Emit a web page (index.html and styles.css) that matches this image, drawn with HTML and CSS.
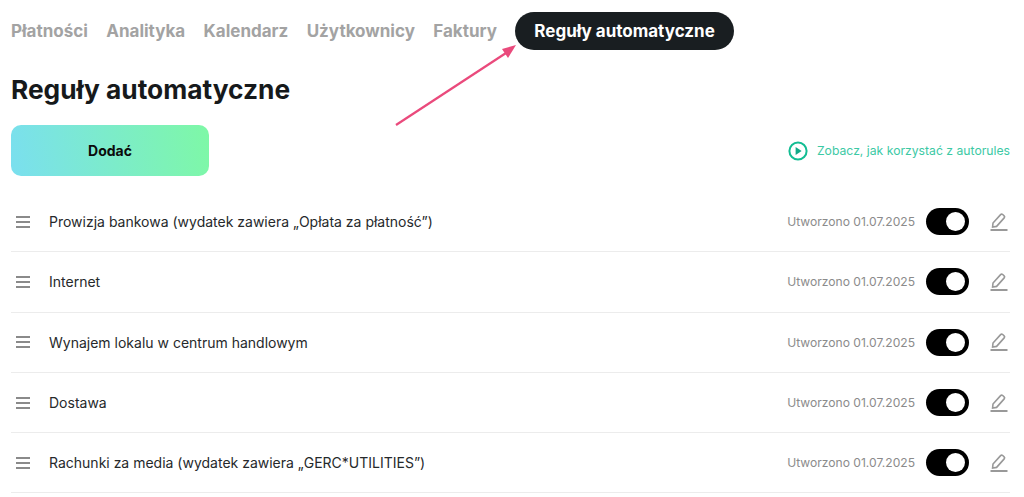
FILE: index.html
```html
<!DOCTYPE html>
<html lang="pl">
<head>
<meta charset="utf-8">
<title>Reguły automatyczne</title>
<link rel="stylesheet" href="styles.css">
</head>
<body>
<div class="page">
  <nav class="tabs">
    <span class="tab">Płatności</span>
    <span class="tab">Analityka</span>
    <span class="tab">Kalendarz</span>
    <span class="tab">Użytkownicy</span>
    <span class="tab">Faktury</span>
    <span class="tab active">Reguły automatyczne</span>
  </nav>
  <h1 class="title">Reguły automatyczne</h1>
  <div class="toolbar">
    <button class="add">Dodać</button>
    <a class="help">
      <svg class="play" viewBox="0 0 20 20"><circle cx="10" cy="10" r="8.6" fill="none" stroke="#12bd93" stroke-width="2"/><path d="M7.6 6l6 4-6 4z" fill="#12a987"/></svg>
      <span>Zobacz, jak korzystać z autorules</span>
    </a>
  </div>
  <ul class="rules">
    <li class="rule">
      <svg class="drag" viewBox="0 0 14 12"><path d="M0 1h14M0 6h14M0 11h14"/></svg>
      <span class="name">Prowizja bankowa (wydatek zawiera „Opłata za płatność”)</span>
      <span class="date">Utworzono 01.07.2025</span>
      <span class="toggle"><span class="knob"></span></span>
      <svg class="edit" viewBox="0 0 18 20"><path d="M2.6 15 3 11 10.6 2.6a1.5 1.5 0 0 1 2.1-.1l1.4 1.3a1.5 1.5 0 0 1 .1 2.1L6.6 14.4z"/><path class="edit-line" d="M0.5 18h17"/></svg>
    </li>
    <li class="rule">
      <svg class="drag" viewBox="0 0 14 12"><path d="M0 1h14M0 6h14M0 11h14"/></svg>
      <span class="name">Internet</span>
      <span class="date">Utworzono 01.07.2025</span>
      <span class="toggle"><span class="knob"></span></span>
      <svg class="edit" viewBox="0 0 18 20"><path d="M2.6 15 3 11 10.6 2.6a1.5 1.5 0 0 1 2.1-.1l1.4 1.3a1.5 1.5 0 0 1 .1 2.1L6.6 14.4z"/><path class="edit-line" d="M0.5 18h17"/></svg>
    </li>
    <li class="rule">
      <svg class="drag" viewBox="0 0 14 12"><path d="M0 1h14M0 6h14M0 11h14"/></svg>
      <span class="name">Wynajem lokalu w centrum handlowym</span>
      <span class="date">Utworzono 01.07.2025</span>
      <span class="toggle"><span class="knob"></span></span>
      <svg class="edit" viewBox="0 0 18 20"><path d="M2.6 15 3 11 10.6 2.6a1.5 1.5 0 0 1 2.1-.1l1.4 1.3a1.5 1.5 0 0 1 .1 2.1L6.6 14.4z"/><path class="edit-line" d="M0.5 18h17"/></svg>
    </li>
    <li class="rule">
      <svg class="drag" viewBox="0 0 14 12"><path d="M0 1h14M0 6h14M0 11h14"/></svg>
      <span class="name">Dostawa</span>
      <span class="date">Utworzono 01.07.2025</span>
      <span class="toggle"><span class="knob"></span></span>
      <svg class="edit" viewBox="0 0 18 20"><path d="M2.6 15 3 11 10.6 2.6a1.5 1.5 0 0 1 2.1-.1l1.4 1.3a1.5 1.5 0 0 1 .1 2.1L6.6 14.4z"/><path class="edit-line" d="M0.5 18h17"/></svg>
    </li>
    <li class="rule">
      <svg class="drag" viewBox="0 0 14 12"><path d="M0 1h14M0 6h14M0 11h14"/></svg>
      <span class="name">Rachunki za media (wydatek zawiera „GERC*UTILITIES”)</span>
      <span class="date">Utworzono 01.07.2025</span>
      <span class="toggle"><span class="knob"></span></span>
      <svg class="edit" viewBox="0 0 18 20"><path d="M2.6 15 3 11 10.6 2.6a1.5 1.5 0 0 1 2.1-.1l1.4 1.3a1.5 1.5 0 0 1 .1 2.1L6.6 14.4z"/><path class="edit-line" d="M0.5 18h17"/></svg>
    </li>
  </ul>
  <svg class="arrow" viewBox="0 0 130 90"><path d="M2 81 L 112 9" stroke="#ea4a7c" stroke-width="2.2" fill="none"/><path d="M122 1 L 108 5 L 114 14 Z" fill="#ea4a7c"/></svg>
</div>
</body>
</html>
```
FILE: styles.css
```css
* { box-sizing: border-box; }
html, body { margin: 0; padding: 0; background: #fff; }
body { font-family: Inter, "Liberation Sans", sans-serif; color: #1a1f22; overflow: hidden; }
.page { position: relative; width: 1024px; height: 497px; padding: 12px 14px 0 11px; overflow: hidden; }
.tabs { display: flex; align-items: center; gap: 18.4px; height: 38px; }
.tab { font-size: 17px; font-weight: 700; color: #a3a3a3; white-space: nowrap; }
.tab.active { background: #191e21; color: #fff; border-radius: 19px; height: 38px; line-height: 38px; padding: 0 19px; }
.title { margin: 24px 0 0; font-size: 26.3px; line-height: 32px; font-weight: 700; color: #16191b; }
.toolbar { display: flex; align-items: center; justify-content: space-between; margin-top: 19px; }
.add { width: 198px; height: 51px; border: 0; border-radius: 10px; font: 700 14px Inter, sans-serif; color: #0b0b0b; background: linear-gradient(80deg, #7adfef, #7ef8a6); }
.help { display: flex; align-items: center; gap: 9px; font-size: 12.2px; color: #3cc9a4; }
.play { width: 20px; height: 20px; }
.rules { list-style: none; margin: 16px 0 0; padding: 0; }
.rule { display: flex; align-items: center; height: 60.3px; border-bottom: 1px solid #ececec; font-size: 14px; color: #26292b; }
.drag { width: 14px; height: 12px; margin-left: 5px; fill: none; stroke: #8a8a8a; stroke-width: 2; flex: none; }
.name { margin-left: 19px; flex: 1; white-space: nowrap; }
.date { font-size: 12.1px; color: #8b8b8b; white-space: nowrap; }
.toggle { display: flex; align-items: center; justify-content: flex-end; width: 43px; height: 27px; margin-left: 11px; padding-right: 4px; border-radius: 14px; background: #000; flex: none; }
.knob { width: 19px; height: 19px; border-radius: 50%; background: #fff; }
.edit { width: 18px; height: 20px; margin: 0 2px 0 21px; fill: none; stroke: #999; stroke-width: 1.6; flex: none; }
.edit-line { stroke-width: 2; }
.arrow { position: absolute; left: 394px; top: 44px; width: 130px; height: 90px; }
```
